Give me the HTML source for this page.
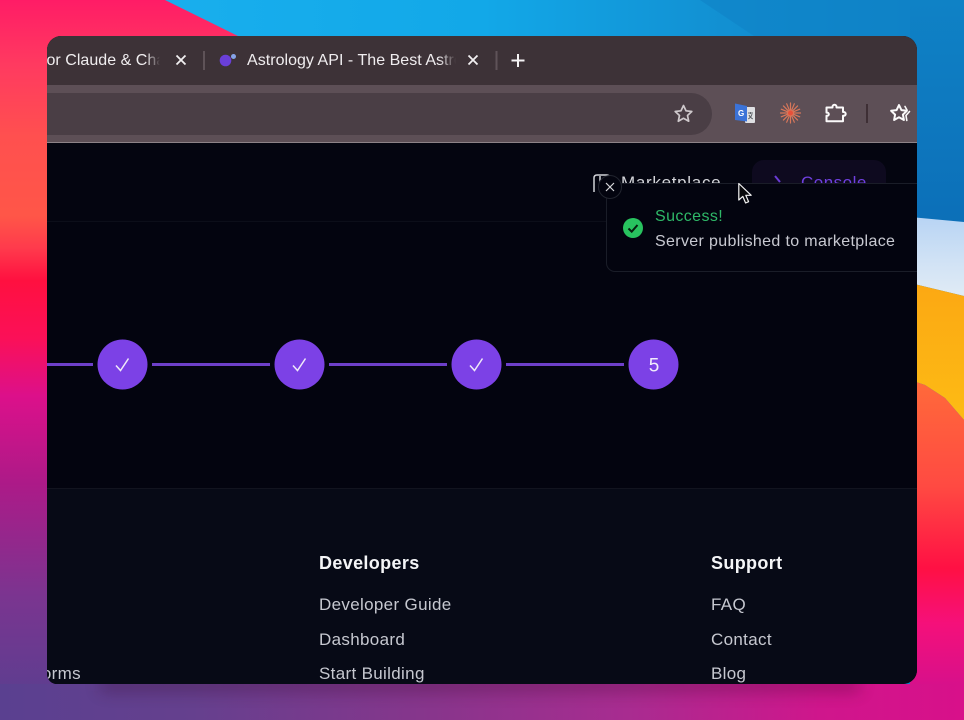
<!DOCTYPE html>
<html><head><meta charset="utf-8"><style>
html,body{margin:0;padding:0;background:#111}
#s{position:relative;width:964px;height:720px;overflow:hidden;font-family:"Liberation Sans",sans-serif}
#s>svg.bg{position:absolute;left:0;top:0}
#w{position:absolute;left:47px;top:36px;width:870px;height:648px;overflow:hidden;border-radius:0 14px 14px 0;border-top-left-radius:14px;border-bottom-left-radius:10px;background:#03040f}
.t{position:absolute;white-space:nowrap;line-height:20px}
.f{font-size:17px;color:#c6c8d0;letter-spacing:.33px}
.h{font-size:18px;font-weight:bold;color:#f4f5f7;letter-spacing:.35px}
</style></head><body><div id="s">
<svg class="bg" width="964" height="720" viewBox="0 0 964 720">
<defs>
<linearGradient id="top" x1="0" x2="1" y1="0" y2="0"><stop offset="0" stop-color="#1cb2f0"/><stop offset=".5" stop-color="#12a8e8"/><stop offset=".75" stop-color="#1290d2"/><stop offset="1" stop-color="#0f7fc4"/></linearGradient>
<linearGradient id="lft" x1="0" x2="0" y1="0" y2="1">
<stop offset="0" stop-color="#ff1c66"/><stop offset=".09" stop-color="#ff3a60"/><stop offset=".19" stop-color="#ff504f"/><stop offset=".3" stop-color="#ff5648"/><stop offset=".345" stop-color="#ff3a4c"/><stop offset=".39" stop-color="#ff1040"/><stop offset=".47" stop-color="#fb1058"/><stop offset=".55" stop-color="#dc108a"/><stop offset=".67" stop-color="#ad1a88"/><stop offset=".83" stop-color="#7a3590"/><stop offset="1" stop-color="#56408f"/></linearGradient>
<linearGradient id="btm" x1="0" x2="1" y1="0" y2="0"><stop offset="0" stop-color="#5a4090"/><stop offset=".2" stop-color="#65408e"/><stop offset=".45" stop-color="#88358c"/><stop offset=".65" stop-color="#a82c90"/><stop offset=".85" stop-color="#cf168c"/><stop offset="1" stop-color="#d8108a"/></linearGradient>
<linearGradient id="rbl" x1="0" x2="0" y1="0" y2="1"><stop offset="0" stop-color="#0f82c6"/><stop offset="1" stop-color="#0c6fb8"/></linearGradient>
<linearGradient id="rlt" x1="0" x2="0" y1="0" y2="1"><stop offset="0" stop-color="#b8d4f4"/><stop offset=".6" stop-color="#d2e3f5"/><stop offset="1" stop-color="#e0ebf5"/></linearGradient>
<linearGradient id="ryl" x1="0" x2="0" y1="0" y2="1"><stop offset="0" stop-color="#fca813"/><stop offset="1" stop-color="#fdbb14"/></linearGradient>
<linearGradient id="rrd" x1="0" x2="0" y1="0" y2="1"><stop offset="0" stop-color="#ff6a3a"/><stop offset=".35" stop-color="#ff4a42"/><stop offset=".62" stop-color="#ff1044"/><stop offset=".8" stop-color="#f5107a"/><stop offset="1" stop-color="#d8108a"/></linearGradient>
<filter id="bl" x="-5%" y="-300%" width="110%" height="700%"><feGaussianBlur stdDeviation="8"/></filter>
</defs>
<rect width="964" height="720" fill="url(#top)"/>
<polygon points="700,0 964,0 964,100 760,40" fill="#0f82c6" opacity=".6"/>
<rect x="910" y="0" width="54" height="225" fill="url(#rbl)"/>
<polygon points="0,0 165,0 240,37 240,720 0,720" fill="url(#lft)"/>
<rect x="0" y="684" width="964" height="36" fill="url(#btm)"/>
<rect x="100" y="678" width="760" height="14" fill="#300020" opacity=".3" filter="url(#bl)"/>
<polygon points="910,217 964,222 964,296 910,283" fill="url(#rlt)"/>
<polygon points="910,283 964,296 964,420 945,398 925,385 910,380" fill="url(#ryl)"/>
<polygon points="910,380 925,385 945,398 964,420 964,684 910,684" fill="url(#rrd)"/>
</svg>

<div id="w">
  <!-- tab bar -->
  <div style="position:absolute;left:0;top:0;width:870px;height:49px;background:#3d3237"></div>
  <div style="position:absolute;left:0;top:49px;width:870px;height:57px;background:#5d4f56"></div>
  <div style="position:absolute;left:-20px;top:57px;width:685px;height:42px;border-radius:21px;background:#4a3e45"></div>
  <div style="position:absolute;left:0;top:106px;width:870px;height:1px;background:#8d8388"></div>

  <div class="t" style="left:-5px;top:15px;width:118px;overflow:hidden;font-size:16px;color:#f0edef;letter-spacing:.03px;-webkit-mask-image:linear-gradient(90deg,#000 88%,transparent);mask-image:linear-gradient(90deg,#000 88%,transparent)">for Claude &amp; Chat</div>
  <div class="t" style="left:200px;top:15px;width:209px;overflow:hidden;font-size:16px;color:#f0edef;letter-spacing:.03px;-webkit-mask-image:linear-gradient(90deg,#000 92%,transparent);mask-image:linear-gradient(90deg,#000 92%,transparent)">Astrology API - The Best Astrology</div>

  <!-- page -->
  <div style="position:absolute;left:0;top:107px;width:870px;height:78px;background:#040510"></div>
  <div style="position:absolute;left:0;top:185px;width:870px;height:1px;background:#0c0e19"></div>
  <div style="position:absolute;left:0;top:452px;width:870px;height:196px;background:#070a16;border-top:1px solid #12141f;box-sizing:border-box"></div>

  <div class="t" style="left:574px;top:137px;color:#d4d5da;font-size:17px;letter-spacing:.7px">Marketplace</div>
  <div style="position:absolute;left:705px;top:124px;width:134px;height:50px;border-radius:12px;background:#0e0a1f"></div>
  <div class="t" style="left:754px;top:137px;font-size:17px;color:#7040e0;letter-spacing:.5px">Console</div>

  <!-- toast -->
  <div style="position:absolute;left:559px;top:147px;width:340px;height:89px;box-sizing:border-box;background:#03040f;border:1px solid #1a1d28;border-radius:9px"></div>
  <div class="t" style="left:608px;top:171px;font-size:16px;color:#2fb868;letter-spacing:.4px">Success!</div>
  <div class="t" style="left:608px;top:196px;font-size:16px;color:#c8c9d1;letter-spacing:.35px">Server published to marketplace</div>

  <!-- footer -->
  <div class="t h" style="left:272px;top:517px">Developers</div>
  <div class="t f" style="left:272px;top:559px">Developer Guide</div>
  <div class="t f" style="left:272px;top:594px">Dashboard</div>
  <div class="t f" style="left:272px;top:628px">Start Building</div>
  <div class="t h" style="left:664px;top:517px">Support</div>
  <div class="t f" style="left:664px;top:559px">FAQ</div>
  <div class="t f" style="left:664px;top:594px">Contact</div>
  <div class="t f" style="left:664px;top:628px">Blog</div>
  <div class="t f" style="right:836px;top:628px">Platforms</div>
</div>

<svg style="position:absolute;left:0;top:0;pointer-events:none" width="964" height="720" viewBox="0 0 964 720" fill="none">
  <!-- tab glyphs -->
  <path d="M176.500 55.500l9 9M185.500 55.500l-9 9" stroke="#f2f0f1" stroke-width="1.800"/>
  <path d="M468.500 55.500l9 9M477.500 55.500l-9 9" stroke="#f2f0f1" stroke-width="1.800"/>
  <path d="M204 51v19M496.500 51v19" stroke="#5f5358" stroke-width="2"/>
  <path d="M518 54v13M511.500 60.500h13" stroke="#f5f3f4" stroke-width="2"/>
  <circle cx="225.500" cy="60.500" r="5.800" fill="#6a3fd8"/>
  <circle cx="233.500" cy="56.500" r="2.500" fill="#86a4e8"/>
  <!-- bookmark star -->
  <path d="M683.500 105.500l2.500 5.300 5.800.7-4.300 4 1.200 5.700-5.200-2.900-5.200 2.900 1.200-5.700-4.300-4 5.800-.7z" stroke="#cfc9cc" stroke-width="1.700" stroke-linejoin="round"/>
  <!-- translate -->
  <rect x="745" y="107" width="10" height="16" rx="1" fill="#dfe0e3"/>
  <path d="M748 113h5M750.500 112v2M752 114c-.6 2.400-2 4-3.800 5M749 115c.8 1.700 2 3 3.800 4" stroke="#5f6368" stroke-width="1"/>
  <path d="M735 103.500l12 2.500v15.500l-12-1.500z" fill="#3b73d8"/>
  <text x="738" y="116" font-family="Liberation Sans,sans-serif" font-size="8" font-weight="bold" fill="#fff">G</text>
  <!-- sunburst -->
  <g stroke="#d9775a" stroke-width="1.200" stroke-linecap="round">
    <path d="M790.500 103v20M780.500 113h20M783.400 105.900l14.200 14.200M797.600 105.900l-14.200 14.200M786.700 103.800l7.600 18.400M794.300 103.800l-7.600 18.400M781.300 109.200l18.400 7.600M799.700 109.200l-18.400 7.600"/>
  </g>
  <circle cx="790.500" cy="113" r="2.500" fill="#e8503a"/>
  <!-- puzzle -->
  <path d="M826.500 107.500h6v-.8a2 2 0 0 1 4 0v.8h6.500v4.500h.8a1.900 1.900 0 0 1 0 3.800h-.8v5.500h-16.500v-5.500h.7a1.600 1.600 0 0 0 0-3.200h-.7z" stroke="#fbfafa" stroke-width="2" stroke-linejoin="round"/>
  <path d="M867 104v19" stroke="#3e2f35" stroke-width="2"/>
  <!-- star list -->
  <path d="M899 105l2.400 5.100 5.500.7-4 3.800 1 5.400-4.900-2.700-4.900 2.700 1-5.400-4-3.800 5.500-.7z" stroke="#fbfafa" stroke-width="2" stroke-linejoin="round"/>
  <path d="M905 106.500l2 3.500M909.500 111.500l-3.500 4 .8 5" stroke="#fbfafa" stroke-width="1.600" stroke-linecap="round"/>

  <!-- steps -->
  <path d="M47 364.500h46M152 364.500h118M329 364.500h118M506 364.500h118" stroke="#6d3fc9" stroke-width="3"/>
  <circle cx="122.500" cy="364.500" r="25" fill="#7c41e6"/>
  <circle cx="299.500" cy="364.500" r="25" fill="#7c41e6"/>
  <circle cx="476.500" cy="364.500" r="25" fill="#7c41e6"/>
  <circle cx="653.500" cy="364.500" r="25" fill="#7c41e6"/>
  <path d="M116 365.500l4.500 5 8-12M293 365.500l4.500 5 8-12M470 365.500l4.500 5 8-12" stroke="#efe9f8" stroke-width="1.500"/>
  <text x="654" y="371.500" text-anchor="middle" font-family="Liberation Sans,sans-serif" font-size="19" fill="#f1ecfb">5</text>

  <!-- marketplace icon (clipped by toast) -->
  <path d="M594 192v-14c0-2 1-3 3-3h10c1.500 0 2.500 1 2.500 2v4M600 176v16" stroke="#d2d3d8" stroke-width="1.500"/>
  <path d="M775 176l5 6" stroke="#6a3bd6" stroke-width="2"/>

  <!-- toast -->
  <circle cx="610" cy="187" r="11.500" fill="#03040f" stroke="#22252f" stroke-width="1"/>
  <path d="M606 183l8 8M614 183l-8 8" stroke="#d8d8dc" stroke-width="1.200"/>
  <circle cx="633" cy="228" r="10" fill="#28c35f"/>
  <path d="M628.500 228.500l3.200 3.200 5.800-6.700" stroke="#06200f" stroke-width="2"/>

  <!-- cursor -->
  <path d="M738.800 183.500v16.500l4-3.600 2.800 6.600 3-1.300-2.800-6.400h5.400z" fill="#0a0a0c" stroke="#f2f2f2" stroke-width="1.200" stroke-linejoin="round"/>
</svg>
</div></body></html>
